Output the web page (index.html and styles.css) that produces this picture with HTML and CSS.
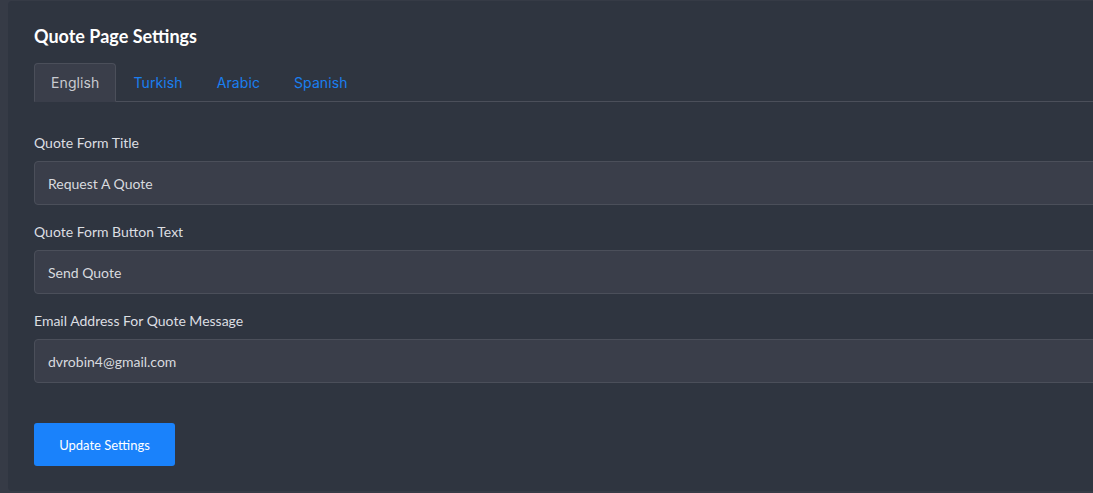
FILE: index.html
```html
<!DOCTYPE html>
<html lang="en">
<head>
    <meta charset="UTF-8">
    <meta name="viewport" content="width=device-width, initial-scale=1.0">
    <title>Quote Page Settings</title>
    <link rel="stylesheet" href="styles.css">
</head>
<body>

    <div class="card">
        <h2 class="card-title">Quote Page Settings</h2>

        <div class="tabs">
            <a href="#" class="tab active">English</a>
            <a href="#" class="tab">Turkish</a>
            <a href="#" class="tab">Arabic</a>
            <a href="#" class="tab">Spanish</a>
        </div>

        <form class="settings-form">
            <div class="form-group">
                <label for="quote_title">Quote Form Title</label>
                <input type="text" id="quote_title" value="Request A Quote">
            </div>
            <div class="form-group">
                <label for="quote_btn">Quote Form Button Text</label>
                <input type="text" id="quote_btn" value="Send Quote">
            </div>
            <div class="form-group">
                <label for="quote_mail">Email Address For Quote Message</label>
                <input type="text" id="quote_mail" value="dvrobin4@gmail.com">
            </div>
            <button type="button" class="btn">Update Settings</button>
        </form>
    </div>

</body>
</html>
```

FILE: styles.css
```css
body {
    font-family: 'Lato', sans-serif;
    background-color: #363b46;
    margin: 0;
    padding: 1px 0 2px 8px;
    overflow: hidden;
}
.card {
    width: 1130px;
    background: #2f3540;
    border-radius: 4px 0 0 4px;
    padding: 24px 0 25px 26px;
    box-sizing: border-box;
}
.card-title {
    margin: 0 0 16px 0;
    color: #ffffff;
    font-size: 18px;
    font-weight: bold;
    line-height: 22px;
}
.tabs {
    display: flex;
    border-bottom: 1px solid #4b4f5a;
}
.tab {
    font-family: 'Inter', sans-serif;
    font-size: 14px;
    color: #1a7ff0;
    text-decoration: none;
    padding: 0 16px;
    height: 37px;
    line-height: 38px;
    border: 1px solid transparent;
    border-bottom: none;
    border-radius: 4px 4px 0 0;
    margin-bottom: -1px;
    letter-spacing: 0.1px;
}
.tab.active {
    color: #c9cbd0;
    background: #3a3e4a;
    border-color: #4b4f5a;
    border-bottom: 1px solid #3a3e4a;
}
.settings-form {
    padding-top: 31px;
}
.form-group {
    margin-bottom: 17px;
}
.form-group label {
    display: block;
    color: #dcdee2;
    font-size: 14px;
    line-height: 20px;
    margin-bottom: 8px;
}
.form-group input {
    display: block;
    width: 100%;
    height: 44px;
    box-sizing: border-box;
    background: #3a3e4a;
    border: 1px solid #4b4f5a;
    border-radius: 4px;
    color: #d8dadf;
    font-family: 'Lato', sans-serif;
    font-size: 14px;
    padding: 0 13px;
    outline: none;
}
.btn {
    margin-top: 23px;
    height: 43px;
    width: 141px;
    background: #1a82fb;
    color: #ffffff;
    border: none;
    border-radius: 3px;
    font-family: 'Lato', sans-serif;
    font-size: 13px;
    cursor: pointer;
}
```
